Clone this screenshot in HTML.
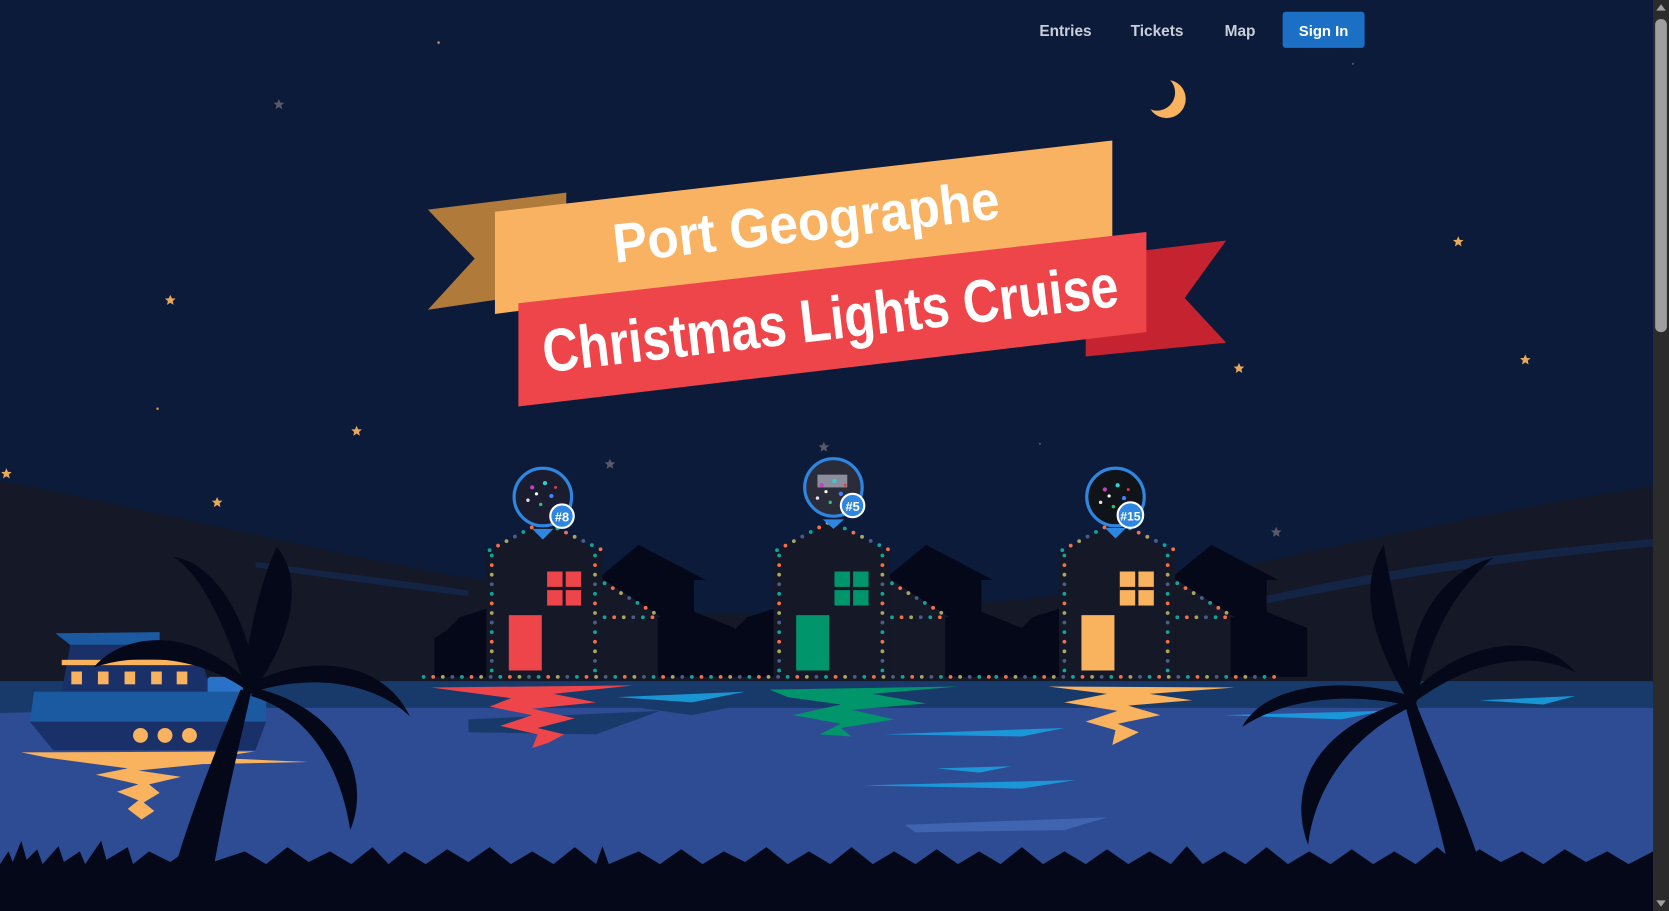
<!DOCTYPE html>
<html><head><meta charset="utf-8"><style>
html,body{margin:0;padding:0;background:#0c1b3a;overflow:hidden}
svg{display:block}
</style></head><body>
<svg width="1669" height="911" viewBox="0 0 1568 856" preserveAspectRatio="none" xmlns="http://www.w3.org/2000/svg">
<defs>
<g id="house">
  <path d="M408,636 L408,600 L420,592 L432,580 L457,572 L457,636Z" fill="#050818"/>
  <path d="M566,540 L600,512 L663,545 L652,545 L652,636 L566,636Z" fill="#050818"/>
  <path d="M618,636 L618,585 L645,572 L690,590 L690,636Z" fill="#050818"/>
  <path d="M452,522 L510,490 L570,522 L566,522 L566,636 L457,636 L457,522Z" fill="#141827"/>
  <path d="M566,544 L622,580 L618,580 L618,636 L566,636Z" fill="#141827"/>
  <g fill="none" stroke-width="3.6" stroke-linecap="round">
    <g stroke="#12a39a" stroke-dasharray="0 36">
      <path d="M460,517 L510,490 L566,517"/><path d="M462,522 L462,632"/><path d="M559,522 L559,632"/><path d="M568,548 L618,578"/><path d="M568,580 L618,580"/><path d="M398,636 L668,636"/>
    </g>
    <g stroke="#f2704a" stroke-dasharray="0 36" stroke-dashoffset="-9">
      <path d="M460,517 L510,490 L566,517"/><path d="M462,522 L462,632"/><path d="M559,522 L559,632"/><path d="M568,548 L618,578"/><path d="M568,580 L618,580"/><path d="M398,636 L668,636"/>
    </g>
    <g stroke="#a9a65e" stroke-dasharray="0 36" stroke-dashoffset="-18">
      <path d="M460,517 L510,490 L566,517"/><path d="M462,522 L462,632"/><path d="M559,522 L559,632"/><path d="M568,548 L618,578"/><path d="M568,580 L618,580"/><path d="M398,636 L668,636"/>
    </g>
    <g stroke="#4d5c85" stroke-dasharray="0 36" stroke-dashoffset="-27">
      <path d="M460,517 L510,490 L566,517"/><path d="M462,522 L462,632"/><path d="M559,522 L559,632"/><path d="M568,548 L618,578"/><path d="M568,580 L618,580"/><path d="M398,636 L668,636"/>
    </g>
  </g>
</g>
<path id="star" d="M0,-5 L1.5,-1.6 L5,-1.5 L2.3,0.9 L3.1,4.5 L0,2.5 L-3.1,4.5 L-2.3,0.9 L-5,-1.5 L-1.5,-1.6Z"/>
<g id="lights">
  <circle cx="-8" cy="-6" r="2" fill="#c040c0"/><circle cx="4" cy="-10" r="2" fill="#30d0d0"/><circle cx="10" cy="2" r="2" fill="#4080ff"/><circle cx="-12" cy="6" r="1.6" fill="#e0e0f0"/><circle cx="0" cy="10" r="1.6" fill="#30c070"/><circle cx="-4" cy="0" r="1.5" fill="#ffffff"/><circle cx="14" cy="-6" r="1.4" fill="#e04040"/>
</g>
</defs>
<rect width="1568" height="856" fill="#0c1b3a"/>
<!-- stars -->
<g fill="#e9a85a">
<use href="#star" x="160" y="282"/><use href="#star" x="335" y="405"/><use href="#star" x="204" y="472"/>
<use href="#star" x="6" y="445"/><use href="#star" x="1164" y="346"/><use href="#star" x="1370" y="227"/><use href="#star" x="1433" y="338"/>
</g>
<g fill="#5a5a66"><use href="#star" x="262" y="98"/><use href="#star" x="573" y="436"/><use href="#star" x="1199" y="500"/><use href="#star" x="774" y="420"/></g>
<circle cx="412" cy="40" r="1.2" fill="#c98a4a"/><circle cx="148" cy="384" r="1.2" fill="#c98a4a"/><circle cx="977" cy="417" r="1" fill="#556"/><circle cx="1271" cy="60" r="1" fill="#556"/>
<!-- moon -->
<circle cx="1096" cy="93" r="18" fill="#f9b25e"/>
<circle cx="1087" cy="87" r="17" fill="#0c1b3a"/>
<!-- nav -->
<g font-family="Liberation Sans, sans-serif" font-weight="bold" font-size="14.5" fill="#c9ced8" text-anchor="middle">
<text x="1001" y="34">Entries</text><text x="1087" y="34">Tickets</text><text x="1165" y="34">Map</text>
</g>
<rect x="1205" y="11" width="77" height="34" rx="3" fill="#1b6fc4"/>
<text x="1243.5" y="34" font-family="Liberation Sans, sans-serif" font-weight="bold" font-size="14" fill="#fff" text-anchor="middle">Sign In</text>
<!-- banner -->
<path d="M402,197 L532,181 L532,272 L402,291 L446,243Z" fill="#b07a3a"/>
<path d="M465,199 L1045,132 L1045,222 L465,295Z" fill="#f9b262"/>
<path d="M1020,242 L1152,226 L1113,280 L1152,322 L1020,335Z" fill="#c5232f"/>
<path d="M487,285 L1077,218 L1077,312 L487,382Z" fill="#ee454a"/>
<g font-family="Liberation Sans, sans-serif" font-weight="bold" fill="#fff">
<text transform="translate(578,247) rotate(-6.6)" font-size="52" textLength="365" lengthAdjust="spacingAndGlyphs">Port Geographe</text>
<text transform="translate(512,350) rotate(-6.6)" font-size="57" textLength="544" lengthAdjust="spacingAndGlyphs">Christmas Lights Cruise</text>
</g>
<!-- hills -->
<path d="M0,452 C150,480 350,530 470,548 L470,640 L0,640Z" fill="#141827"/>
<path d="M420,560 C600,585 900,585 1150,535 C1300,505 1450,470 1568,455 L1568,640 L420,640Z" fill="#141827"/>
<path d="M1190,560 C1300,535 1400,520 1568,505 L1568,512 C1400,528 1300,545 1190,567Z" fill="#13284e" opacity=".8"/>
<path d="M240,528 C330,540 400,548 440,555 L440,560 C380,553 320,545 240,533Z" fill="#13284e" opacity=".8"/>
<!-- houses -->
<use href="#house"/>
<use href="#house" x="270"/>
<use href="#house" x="538"/>
<!-- windows/doors -->
<g>
<rect x="514" y="537" width="32" height="32" fill="#ee454a"/><rect x="478" y="578" width="31" height="52" fill="#ee454a"/>
<rect x="784" y="537" width="32" height="32" fill="#00956b"/><rect x="748" y="578" width="31" height="52" fill="#00956b"/>
<rect x="1052" y="537" width="32" height="32" fill="#f9b25e"/><rect x="1016" y="578" width="31" height="52" fill="#f9b25e"/>
<g stroke="#141827" stroke-width="3"><path d="M530,537 V569 M514,553 H546 M800,537 V569 M784,553 H816 M1068,537 V569 M1052,553 H1084"/></g>
</g>
<!-- water -->
<rect x="0" y="640" width="1568" height="25" fill="#183a6a"/>
<rect x="0" y="665" width="1568" height="160" fill="#2e4c94"/>
<path d="M0,660 L120,655 L90,668 L0,670Z M600,665 L700,662 L650,672Z M440,676 L620,668 L560,690 L440,688Z" fill="#183a6a"/>
<g fill="#1aa0e0" opacity=".9">
<path d="M830,690 L1000,684 L960,692Z M810,738 L1010,733 L960,741Z M880,722 L950,720 L920,726Z M1150,672 L1300,668 L1260,676Z M1390,658 L1480,654 L1450,662Z M580,655 L700,650 L650,660Z"/>
</g>
<path d="M850,775 L1040,768 L1000,780 L860,782Z" fill="#4064b0"/>
<!-- reflections -->
<path d="M405,646 L595,644 L520,652 L560,660 L500,666 L540,675 L505,684 L530,690 L515,698 L500,703 L505,690 L470,682 L500,672 L460,664 L480,656Z" fill="#ee454a"/>
<path d="M723,648 L900,645 L820,652 L870,661 L800,667 L840,676 L790,684 L800,692 L770,690 L790,680 L745,672 L790,662 L740,655Z" fill="#00956b"/>
<path d="M985,645 L1160,646 L1080,652 L1120,658 L1060,663 L1090,672 L1050,680 L1070,688 L1045,700 L1048,686 L1020,678 L1050,668 L1000,660 L1040,652Z" fill="#f9b25e"/>
<!-- boat -->
<path d="M52,595 L150,594 L150,606 L66,606Z" fill="#1b5aa0"/>
<path d="M66,606 L150,606 L150,620 L190,624 L200,650 L58,650Z" fill="#1a3068"/>
<rect x="58" y="620" width="130" height="5" fill="#f9b25e"/>
<g fill="#f9b25e"><rect x="67" y="631" width="10" height="12"/><rect x="92" y="631" width="10" height="12"/><rect x="117" y="631" width="10" height="12"/><rect x="142" y="631" width="10" height="12"/><rect x="166" y="631" width="10" height="12"/></g>
<rect x="195" y="636" width="40" height="16" rx="3" fill="#2a72c8"/>
<path d="M32,650 L250,650 L250,678 L28,678Z" fill="#1b5aa0"/>
<path d="M28,678 L250,678 L240,705 L50,705Z" fill="#1a3068"/>
<g fill="#f9b25e"><circle cx="132" cy="691" r="7"/><circle cx="155" cy="691" r="7"/><circle cx="178" cy="691" r="7"/></g>
<path d="M20,707 L240,706 L200,712 L290,716 L190,718 L130,724 L170,730 L140,737 L150,745 L135,754 L145,762 L133,770 L120,760 L130,752 L110,744 L130,737 L90,728 L120,722 L45,712Z" fill="#f9b25e"/>
<!-- left palm -->
<g fill="#050818">
<path d="M163,820 L200,820 C210,760 225,700 236,650 L226,648 C205,700 180,760 163,820Z"/>
<path d="M232,650 C215,600 195,545 163,523 C205,530 238,590 240,650Z"/>
<path d="M228,648 C232,600 245,545 260,514 C290,550 268,610 236,652Z"/>
<path d="M234,650 C190,618 135,612 88,627 C120,590 190,590 240,648Z"/>
<path d="M232,652 C290,632 350,640 385,673 C360,620 290,612 230,645Z"/>
<path d="M236,654 C290,670 320,720 329,780 C350,730 320,665 238,646Z"/>
</g>
<!-- right palm -->
<g fill="#050818">
<path d="M1362,820 L1393,820 C1375,760 1345,700 1330,660 L1320,662 C1335,720 1352,770 1362,820Z"/>
<path d="M1325,662 C1300,620 1270,560 1300,512 C1310,570 1320,610 1330,660Z"/>
<path d="M1322,660 C1320,600 1345,540 1403,524 C1360,560 1340,610 1330,662Z"/>
<path d="M1326,662 C1380,620 1440,610 1480,632 C1450,595 1380,595 1322,655Z"/>
<path d="M1328,664 C1270,650 1210,655 1167,683 C1190,640 1270,635 1332,656Z"/>
<path d="M1330,662 C1270,690 1235,740 1229,794 C1205,730 1250,675 1332,656Z"/>
</g>
<!-- grass -->
<path d="M0,856 L0,812 L8,800 L12,810 L20,790 L25,808 L35,798 L40,812 L55,795 L60,810 L75,800 L80,812 L95,790 L100,808 L120,796 L125,812 L140,800 L160,810 L180,796 L200,810 L230,800 L250,812 L270,796 L290,810 L310,800 L330,812 L350,796 L365,812 L380,800 L400,812 L420,798 L440,810 L460,796 L480,812 L500,800 L520,812 L540,796 L560,812 L566,795 L572,812 L600,800 L620,812 L640,798 L660,812 L680,800 L700,810 L720,796 L740,812 L760,800 L780,812 L800,796 L820,812 L840,800 L860,812 L880,798 L900,812 L920,800 L940,812 L960,796 L980,812 L1000,800 L1020,812 L1040,798 L1060,812 L1080,800 L1100,812 L1115,795 L1130,812 L1150,800 L1170,812 L1190,796 L1210,812 L1230,800 L1250,812 L1270,798 L1290,812 L1310,800 L1330,812 L1350,796 L1370,812 L1390,798 L1410,810 L1430,800 L1450,812 L1470,798 L1490,810 L1510,800 L1530,812 L1553,800 L1553,856Z" fill="#050818"/>
<!-- pins -->
<g>
<path d="M500,497 L520,497 L510,507Z" fill="#2f86e0"/>
<circle cx="510" cy="467" r="27" fill="#1a1c30" stroke="#2f86e0" stroke-width="3"/>
<use href="#lights" x="508" y="464"/>
<circle cx="528" cy="485" r="11" fill="#2f86e0" stroke="#fff" stroke-width="2"/>
<text x="528" y="490" font-family="Liberation Sans, sans-serif" font-weight="bold" font-size="12" fill="#fff" text-anchor="middle">#8</text>
<path d="M773,488 L793,488 L783,497Z" fill="#2f86e0"/>
<circle cx="783" cy="458" r="27" fill="#2a2c3a" stroke="#2f86e0" stroke-width="3"/>
<rect x="768" y="446" width="28" height="12" fill="#b8b8c8" opacity=".7"/>
<use href="#lights" x="780" y="462"/>
<circle cx="801" cy="475" r="11" fill="#2f86e0" stroke="#fff" stroke-width="2"/>
<text x="801" y="480" font-family="Liberation Sans, sans-serif" font-weight="bold" font-size="12" fill="#fff" text-anchor="middle">#5</text>
<path d="M1038,496 L1058,496 L1048,506Z" fill="#2f86e0"/>
<circle cx="1048" cy="467" r="27" fill="#101418" stroke="#2f86e0" stroke-width="3"/>
<use href="#lights" x="1046" y="466"/>
<circle cx="1062" cy="484" r="12" fill="#2f86e0" stroke="#fff" stroke-width="2"/>
<text x="1062" y="489" font-family="Liberation Sans, sans-serif" font-weight="bold" font-size="11.5" fill="#fff" text-anchor="middle">#15</text>
</g>
<!-- scrollbar -->
<rect x="1553" y="0" width="15" height="856" fill="#2b2b2b"/>
<rect x="1555" y="18" width="11" height="294" rx="5" fill="#9f9f9f"/>
<path d="M1556,10 L1565,10 L1560.5,4Z M1556,846 L1565,846 L1560.5,852Z" fill="#a0a0a0"/>
</svg>
</body></html>
